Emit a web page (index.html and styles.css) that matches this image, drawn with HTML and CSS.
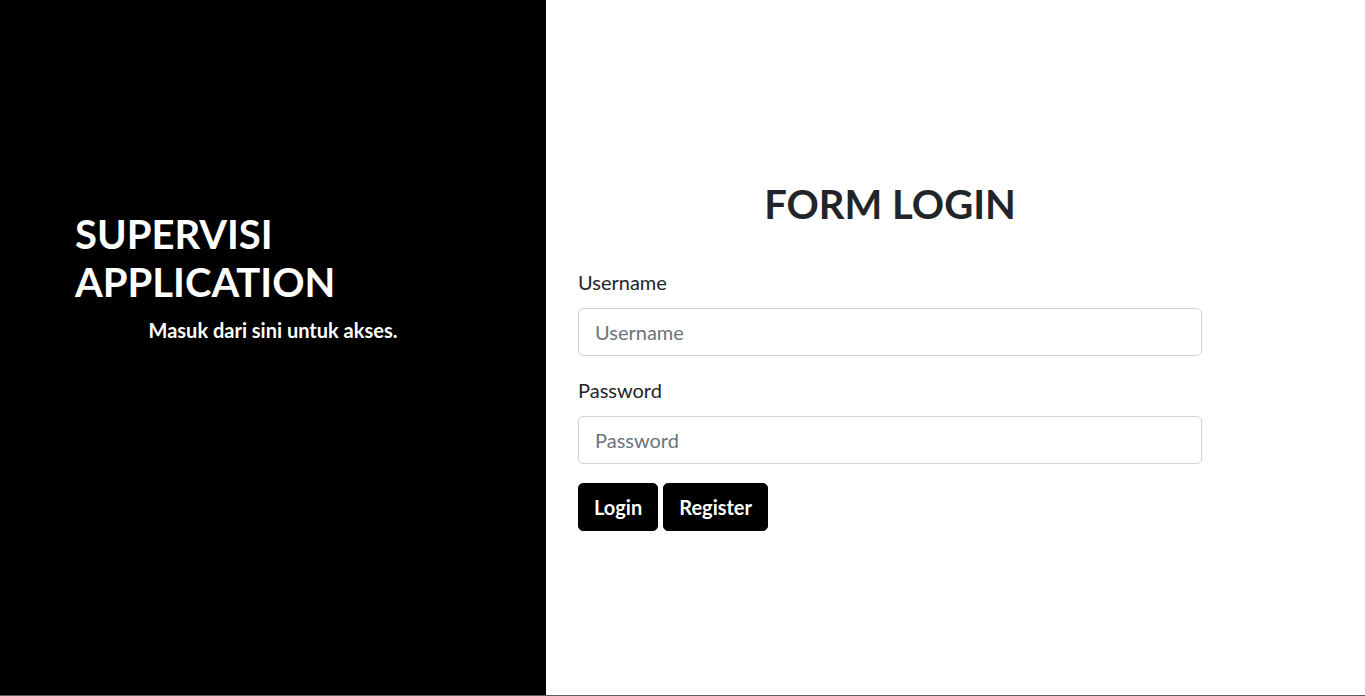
FILE: index.html
```html
<!DOCTYPE html>
<html lang="id">
<head>
<meta charset="utf-8">
<title>Supervisi Application - Login</title>
<link rel="stylesheet" href="styles.css">
</head>
<body>
<div class="page">
  <aside class="side">
    <div class="side-inner">
      <h1 class="brand">SUPERVISI APPLICATION</h1>
      <p class="tagline">Masuk dari sini untuk akses.</p>
    </div>
  </aside>
  <main class="main">
    <form class="login-form">
      <h1 class="form-title">FORM LOGIN</h1>
      <div class="field">
        <label class="field-label" for="username">Username</label>
        <input class="field-input" id="username" type="text" placeholder="Username">
      </div>
      <div class="field">
        <label class="field-label" for="password">Password</label>
        <input class="field-input" id="password" type="password" placeholder="Password">
      </div>
      <div class="actions">
        <button class="btn" type="submit">Login</button>
        <button class="btn" type="button">Register</button>
      </div>
    </form>
  </main>
</div>
</body>
</html>
```

FILE: styles.css
```css
* { box-sizing: border-box; }
html, body { margin: 0; padding: 0; }
body {
  font-family: Lato, "Liberation Sans", sans-serif;
  color: #212529;
  background: #fff;
  height: 696px;
  overflow: hidden;
}
.page {
  display: flex;
  height: 696px;
  border-bottom: 1px solid #5c5c5c;
}
.side {
  width: 546px;
  flex: none;
  background: #000;
  color: #fff;
  padding-top: 210px;
}
.side-inner {
  width: 396px;
  margin: 0 auto;
}
.brand {
  margin: 0 0 9px;
  font-size: 40px;
  line-height: 48px;
  font-weight: 700;
  width: 300px;
}
.tagline {
  margin: 0;
  text-align: center;
  font-size: 20px;
  line-height: 30px;
  font-weight: 700;
}
.main {
  flex: 1;
  padding: 180px 0 0 32px;
}
.login-form {
  width: 624px;
}
.form-title {
  margin: 0 0 39px;
  text-align: center;
  font-size: 40px;
  line-height: 48px;
  font-weight: 700;
  color: #212529;
}
.field {
  margin-bottom: 19px;
}
.field-label {
  display: block;
  font-size: 20px;
  line-height: 30px;
  margin-bottom: 11px;
}
.field-input {
  display: block;
  width: 100%;
  height: 48px;
  padding: 8px 16px;
  font-family: inherit;
  font-size: 20px;
  line-height: 30px;
  color: #495057;
  background: #fff;
  border: 1px solid #ced4da;
  border-radius: 5px;
  outline: none;
}
.field-input::placeholder { color: #6c757d; }
.actions {
  display: flex;
  gap: 5px;
}
.btn {
  height: 48px;
  padding: 8px 15px;
  font-family: inherit;
  font-size: 20px;
  line-height: 30px;
  font-weight: 700;
  color: #fff;
  background: #000;
  border: 1px solid #000;
  border-radius: 5px;
}
```
